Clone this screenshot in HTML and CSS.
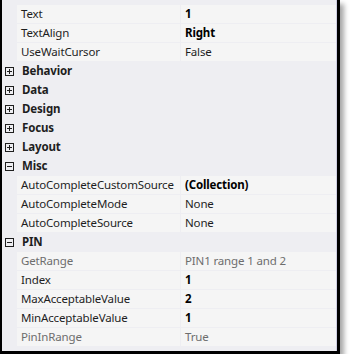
FILE: index.html
```html
<!DOCTYPE html>
<html lang="en">
<head>
    <meta charset="UTF-8">
    <meta name="viewport" content="width=device-width, initial-scale=1.0">
    <title>Property Grid</title>
    <link rel="stylesheet" href="styles.css">
</head>
<body>
    <div class="frame">
        <div class="grid">
            <div class="row">
                <span class="margin"></span>
                <span class="name">Text</span>
                <span class="value changed">1</span>
            </div>
            <div class="row">
                <span class="margin"></span>
                <span class="name">TextAlign</span>
                <span class="value changed">Right</span>
            </div>
            <div class="row">
                <span class="margin"></span>
                <span class="name">UseWaitCursor</span>
                <span class="value">False</span>
            </div>

            <div class="row category">
                <span class="margin"><svg class="toggle" width="9" height="9" viewBox="0 0 9 9"><rect x="0.5" y="0.5" width="8" height="8"/><path d="M2 4.5h5M4.5 2v5"/></svg></span>
                <span class="label">Behavior</span>
            </div>
            <div class="row category">
                <span class="margin"><svg class="toggle" width="9" height="9" viewBox="0 0 9 9"><rect x="0.5" y="0.5" width="8" height="8"/><path d="M2 4.5h5M4.5 2v5"/></svg></span>
                <span class="label">Data</span>
            </div>
            <div class="row category">
                <span class="margin"><svg class="toggle" width="9" height="9" viewBox="0 0 9 9"><rect x="0.5" y="0.5" width="8" height="8"/><path d="M2 4.5h5M4.5 2v5"/></svg></span>
                <span class="label">Design</span>
            </div>
            <div class="row category">
                <span class="margin"><svg class="toggle" width="9" height="9" viewBox="0 0 9 9"><rect x="0.5" y="0.5" width="8" height="8"/><path d="M2 4.5h5M4.5 2v5"/></svg></span>
                <span class="label">Focus</span>
            </div>
            <div class="row category">
                <span class="margin"><svg class="toggle" width="9" height="9" viewBox="0 0 9 9"><rect x="0.5" y="0.5" width="8" height="8"/><path d="M2 4.5h5M4.5 2v5"/></svg></span>
                <span class="label">Layout</span>
            </div>
            <div class="row category">
                <span class="margin"><svg class="toggle" width="9" height="9" viewBox="0 0 9 9"><rect x="0.5" y="0.5" width="8" height="8"/><path d="M2 4.5h5"/></svg></span>
                <span class="label">Misc</span>
            </div>

            <div class="row">
                <span class="margin"></span>
                <span class="name">AutoCompleteCustomSource</span>
                <span class="value changed">(Collection)</span>
            </div>
            <div class="row">
                <span class="margin"></span>
                <span class="name">AutoCompleteMode</span>
                <span class="value">None</span>
            </div>
            <div class="row">
                <span class="margin"></span>
                <span class="name">AutoCompleteSource</span>
                <span class="value">None</span>
            </div>

            <div class="row category">
                <span class="margin"><svg class="toggle" width="9" height="9" viewBox="0 0 9 9"><rect x="0.5" y="0.5" width="8" height="8"/><path d="M2 4.5h5"/></svg></span>
                <span class="label">PIN</span>
            </div>

            <div class="row readonly">
                <span class="margin"></span>
                <span class="name">GetRange</span>
                <span class="value">PIN1 range 1 and 2</span>
            </div>
            <div class="row">
                <span class="margin"></span>
                <span class="name">Index</span>
                <span class="value changed">1</span>
            </div>
            <div class="row">
                <span class="margin"></span>
                <span class="name">MaxAcceptableValue</span>
                <span class="value changed">2</span>
            </div>
            <div class="row">
                <span class="margin"></span>
                <span class="name">MinAcceptableValue</span>
                <span class="value changed">1</span>
            </div>
            <div class="row readonly">
                <span class="margin"></span>
                <span class="name">PinInRange</span>
                <span class="value">True</span>
            </div>
        </div>
    </div>
</body>
</html>
```

FILE: styles.css
```css
body {
    margin: 0;
    background: #fff;
    font-family: 'Noto Sans', 'Open Sans', sans-serif;
    font-size: 11.5px;
    letter-spacing: -0.15px;
    color: #1e1e1e;
}

.frame {
    width: 335px;
    border-left: 2px solid #000;
    border-right: 3px solid #000;
    border-bottom: 3px solid #000;
    box-shadow: 4px 4px 5px rgba(0, 0, 0, 0.35);
}

.grid {
    display: flex;
    flex-direction: column;
    gap: 1px;
    padding: 5px 0 5px;
    background: #eeeef2;
    border-right: 1px solid #cfcfe3;
}

.row {
    display: grid;
    grid-template-columns: 15px 164px 1fr;
    height: 18px;
    line-height: 18px;
}

.name, .value {
    background: #f5f5f5;
    padding-left: 4px;
    white-space: nowrap;
    overflow: hidden;
}

.name {
    border-right: 1px solid #eeeef2;
}

.value.changed {
    font-weight: bold;
    color: #000;
}

.readonly .name, .readonly .value {
    color: #6d6d6d;
}

.margin {
    display: flex;
    align-items: center;
    padding-left: 3px;
}

.category .label {
    grid-column: 2 / 4;
    font-weight: bold;
    padding-left: 5px;
}

.toggle {
    shape-rendering: crispEdges;
}

.toggle rect {
    fill: none;
    stroke: #1e1e1e;
}

.toggle path {
    stroke: #1e1e1e;
}
```
